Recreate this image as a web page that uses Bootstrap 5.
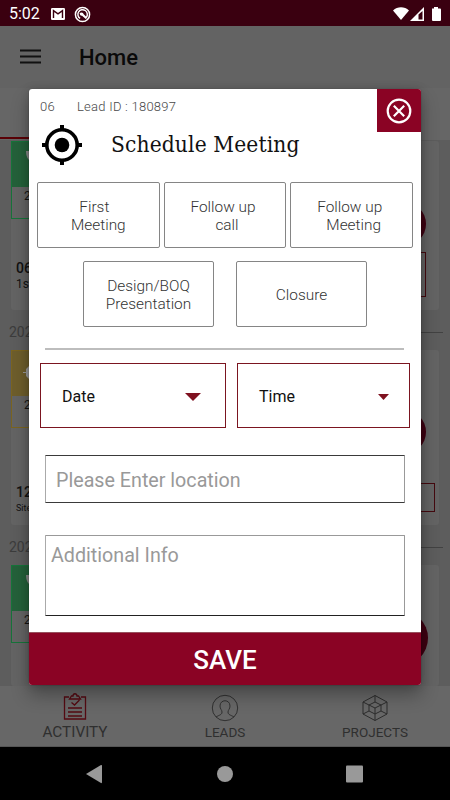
<!DOCTYPE html>
<html lang="en">
<head>
<meta charset="utf-8">
<meta name="viewport" content="width=device-width, initial-scale=1">
<title>Schedule Meeting</title>
<link href="https://cdn.jsdelivr.net/npm/bootstrap@5.3.0/dist/css/bootstrap.min.css" rel="stylesheet">
<style>
body{font-family:Roboto,"Liberation Sans",sans-serif;background:#000;line-height:1.2}
svg{display:block;flex:none}
.phone{width:450px;height:800px;background:#5d5d5d;color:#111}
.statusbar{height:26px;background:#3a0010;padding:2px 8px 0 9px;color:#fff;font-size:16px}
.clock{width:42px}
.appbar{height:62px;background:#636363;padding:0 20px 0}
.apptitle{font-size:22px;font-weight:500;color:#0a0a0a;margin-left:38px;padding-top:3px}
.tabstrip{height:52px;background:#666}
.tabline{width:225px;height:2px;background:#5a0006;margin-top:49px}
.feed{height:546px;padding:1px 9px 0 11px}
.lead-card{width:428px;background:#646464;border-radius:3px;padding-right:13px}
.c1{height:169px}.c2{height:175px}.c3{height:121px}
.tag{width:60px;height:78px;border:1px solid #16743a;font-size:12px}
.tag-top{height:45px;background:#24613a}
.tag.gold{border-color:#7a6420}.tag.gold .tag-top{background:#6e5e2c}
.tag-num{padding-left:12px;padding-top:2px}
.dot{width:44px;height:44px;border-radius:50%;background:#3e0011}
.dot-lg{width:56px;height:56px}
.obox{width:60px;border:1px solid #45090f}
.n1{font-size:14px;font-weight:500;padding-left:5px;line-height:17px}
.n2{font-size:12px;padding-left:5px;line-height:15px}
.n2.tiny{font-size:9px}
.day{height:40px;font-size:14px;color:#3c3c3c;margin-left:-2px;margin-right:-2px}
.dayline{width:40px;height:1px;background:#424242}
.bottomnav{height:61px;background:#676767;color:#2f2f2f;font-weight:400;border-bottom:1px solid #555}
.tabcell{width:150px;padding-top:8px;font-size:13.5px}
.tabcell.current{padding-top:7px;font-size:15.3px}
.sysnav{height:53px;background:#000}
.sheet{left:29px;top:89px;width:392px;height:596px;border-radius:3px;box-shadow:0 10px 18px rgba(0,0,0,.3),0 0 8px rgba(0,0,0,.15),0 0 1px rgba(0,0,0,.6)}
.sheet-head{height:43px}
.meta{font-size:13px;color:#484848;font-weight:300;letter-spacing:.25px;padding:10px 0 0 11px}
.closebox{width:44px;height:43px;background:#8a0324}
.titleline{height:50px;padding-left:12px;margin-top:-2px}
.sheet-title{font-family:"Roboto Slab","DejaVu Serif Condensed","DejaVu Serif",serif;font-size:22.5px;color:#111;margin:1px 0 0 28px;white-space:nowrap;letter-spacing:.14px}
.opt{width:123px;height:66px;padding-top:2px;border:1px solid #858585;border-radius:2px;font-size:15.4px;line-height:18px;font-weight:300;color:#333}
.opt-wide{width:131px}
.options{padding:2px 8px 0;height:79px}
.rule{margin:0 17px 0 16px;height:2px;background:#bdbdbd}
.pick{height:65px;border:1px solid #7b1520;font-size:16px;color:#111}
.inp{margin:0 16px;border:1px solid #3a3a3a;border-left-color:#aaa;border-right-color:#999;border-radius:1px;font-size:19.7px;color:#999;width:360px}
.inp.area{border-top-color:#999;border-bottom-color:#222}
.save{height:53px;background:#8a0324;color:#fff;font-weight:500;font-size:26px;border-top:1px solid #96505c}
</style>
<script src="https://cdn.jsdelivr.net/npm/bootstrap@5.3.0/dist/js/bootstrap.bundle.min.js"></script>
</head>
<body class="overflow-hidden">
<div class="phone position-relative overflow-hidden d-flex flex-column">
  <header class="statusbar d-flex align-items-center">
    <span class="clock">5:02</span>
    <svg width="14" height="12" viewBox="0 0 14 12"><rect width="14" height="12" rx="1.3" fill="#fff"/><path d="M2.500 10V2.600L7 5.800l4.500-3.200V10" fill="none" stroke="#3a0010" stroke-width="1.400"/></svg>
    <svg style="margin-left:9px" width="17" height="17" viewBox="0 0 18 18"><circle cx="9" cy="9" r="7.500" fill="none" stroke="#fff" stroke-width="1.600"/><path d="M6.500 13.200A5 5 0 1 1 13.200 11.800" fill="none" stroke="#fff" stroke-width="1.500"/><path d="M6 7.500c2-1.500 4-.5 4 1l4 4-1.500 1.200-4-3.500C7 10.500 6 9.500 6 7.500z" fill="#fff"/></svg>
    <svg class="ms-auto" width="50" height="16" viewBox="0 0 50 16"><path d="M1 4.500C5.500.300 12.500.300 17 4.500L9 14z" fill="#fff"/><path d="M18 15L32 1v14z" fill="#fff"/><path d="M26.500 8.500L30.500 5v8.500h-4z" fill="#3a0010"/><path d="M40 2.500h2V1h4v1.500h2a1 1 0 0 1 1 1V14a1 1 0 0 1-1 1h-7a1 1 0 0 1-1-1z" fill="#fff"/></svg>
  </header>
  <nav class="appbar d-flex align-items-center">
    <svg width="21" height="16" viewBox="0 0 21 16"><path d="M0 1.500h21M0 7.500h21M0 13.500h21" stroke="#111" stroke-width="1.800"/></svg>
    <span class="apptitle">Home</span>
  </nav>
  <div class="tabstrip d-flex"><div class="tabline"></div></div>

  <main class="feed">
    <section class="lead-card c1 d-flex justify-content-between">
      <div>
        <div class="tag"><div class="tag-top"><svg width="30" height="22" viewBox="0 0 30 22"><path d="M14 9c0 6 2 9 6 11V9z" fill="#888"/></svg></div><div class="tag-num">2</div></div>
        <div class="n1" style="margin-top:41px">06</div><div class="n2">1st</div>
      </div>
      <div class="d-flex flex-column align-items-end"><div class="dot" style="margin-top:61px"></div><div class="obox" style="margin-top:6px;height:45px"></div></div>
    </section>
    <div class="day d-flex align-items-center justify-content-between"><span class="pt-1">202</span><span class="dayline mt-1"></span></div>
    <section class="lead-card c2 d-flex justify-content-between">
      <div>
        <div class="tag gold"><div class="tag-top"><svg width="30" height="30" viewBox="0 0 30 30"><path d="M11 21h3v-3l3-3v13l-3-3v-3h-3z" fill="#999"/></svg></div><div class="tag-num">2</div></div>
        <div class="n1" style="margin-top:56px">12</div><div class="n2 tiny">Site</div>
      </div>
      <div class="d-flex flex-column align-items-end"><div class="dot" style="margin-top:60px"></div><div class="obox" style="margin:29px -9px 0 0;height:29px"></div></div>
    </section>
    <div class="day d-flex align-items-center justify-content-between"><span class="pt-1">202</span><span class="dayline mt-1"></span></div>
    <section class="lead-card c3 d-flex justify-content-between">
      <div class="tag"><div class="tag-top"><svg width="30" height="22" viewBox="0 0 30 22"><path d="M14 9c0 6 2 9 6 11V9z" fill="#888"/></svg></div><div class="tag-num">2</div></div>
      <div class="dot dot-lg" style="margin:45px -2px 0 0"></div>
    </section>
  </main>

  <footer class="bottomnav d-flex">
    <div class="tabcell current d-flex flex-column align-items-center">
      <svg width="24" height="27" viewBox="0 0 24 27" fill="none" stroke="#540a12" stroke-width="1.300"><path d="M6 4H1.500v22h21V4H18M6.500 6h11L15.500 3H14c0-3-4-3-4 0H8.500zM5 15h14M5 19h14M5 23h14M8.500 9.500l3 2.500 5-5"/></svg>
      <span style="line-height:15px;margin-top:5px">ACTIVITY</span>
    </div>
    <div class="tabcell d-flex flex-column align-items-center">
      <svg width="28" height="28" viewBox="0 0 28 28" fill="none" stroke="#303030"><circle cx="14" cy="14" r="12.700"/><path d="M5 23c3-2 6-2 6-5 0-2-2-3-2-6 0-7 10-7 10 0 0 3-2 4-2 6 0 3 3 3 6 5"/></svg>
      <span style="line-height:16px;margin-top:2px">LEADS</span>
    </div>
    <div class="tabcell d-flex flex-column align-items-center">
      <svg width="26" height="28" viewBox="0 0 26 28" fill="none" stroke="#2c2c2c"><path d="M13 1.500l12 6.500v12l-12 6.500L1 20V8zM13 8l6 3v6l-6 3-6-3v-6zM13 1.500V8M25 8l-6 3M25 20l-6-3M13 26.500V14M1 20l6-3M1 8l6 3 6 3 6-3"/></svg>
      <span style="line-height:16px;margin-top:2px">PROJECTS</span>
    </div>
  </footer>
  <div class="sysnav d-flex align-items-center">
    <svg width="450" height="52" viewBox="0 0 450 52" fill="#999"><path d="M86 26l15-9q1-.5 1 1v16q0 1.500-1 1z"/><circle cx="225" cy="26" r="8"/><rect x="346" y="17.500" width="17" height="17" rx="1"/></svg>
  </div>

  <div class="sheet position-absolute bg-white overflow-hidden" role="dialog">
    <div class="sheet-head d-flex justify-content-between">
      <div class="meta d-flex"><span style="width:37px">06</span><span>Lead ID : 180897</span></div>
      <div class="closebox d-flex align-items-center justify-content-center">
        <svg width="26" height="26" viewBox="0 0 26 26" fill="none" stroke="#fff" stroke-width="2.200"><circle cx="13" cy="13" r="11.300"/><path d="M7.800 7.800l10.400 10.400M18.200 7.800L7.800 18.200"/></svg>
      </div>
    </div>
    <div class="titleline d-flex">
      <svg style="margin-top:-6px" width="42" height="42" viewBox="0 0 42 42"><circle cx="21" cy="21" r="15.200" fill="none" stroke="#000" stroke-width="3.600"/><circle cx="21" cy="21" r="7.300"/><path d="M21 1v6M21 35v6M1 21h6M35 21h6" stroke="#000" stroke-width="4"/></svg>
      <h1 class="sheet-title fw-normal">Schedule Meeting</h1>
    </div>
    <div class="options d-flex" style="gap:4px">
      <div class="opt d-flex align-items-center justify-content-center text-center"><span><span class="pe-2">First</span><br>Meeting</span></div>
      <div class="opt d-flex align-items-center justify-content-center text-center"><span><span class="pe-1">Follow up</span><br><span class="ps-1">call</span></span></div>
      <div class="opt d-flex align-items-center justify-content-center text-center"><span><span class="pe-1">Follow up</span><br><span class="ps-1">Meeting</span></span></div>
    </div>
    <div class="options d-flex justify-content-center" style="gap:22px">
      <div class="opt opt-wide d-flex align-items-center justify-content-center text-center">Design/BOQ<br>Presentation</div>
      <div class="opt opt-wide d-flex align-items-center justify-content-center text-center">Closure</div>
    </div>
    <div class="rule" style="margin-top:10px"></div>
    <div class="d-flex" style="margin:13px 11px 0;gap:11px">
      <div class="pick d-flex align-items-center justify-content-between" style="width:186px;padding:2px 24px 0 21px"><span>Date</span><svg width="16" height="8" viewBox="0 0 16 8"><path d="M0 0h16L8 8z" fill="#7f1120"/></svg></div>
      <div class="pick d-flex align-items-center justify-content-between" style="width:173px;padding:2px 20px 0 21px"><span>Time</span><svg width="11" height="6" viewBox="0 0 11 6"><path d="M0 0h11L5.500 6z" fill="#7f1120"/></svg></div>
    </div>
    <div class="inp d-flex align-items-center" style="height:48px;margin-top:27px;padding:4px 0 0 10px">Please Enter location</div>
    <div class="inp area" style="height:81px;margin-top:32px;padding:8px 0 0 5px">Additional Info</div>
    <div class="save d-flex align-items-center justify-content-center pt-1" style="margin-top:16px">SAVE</div>
  </div>
</div>
</body>
</html>
